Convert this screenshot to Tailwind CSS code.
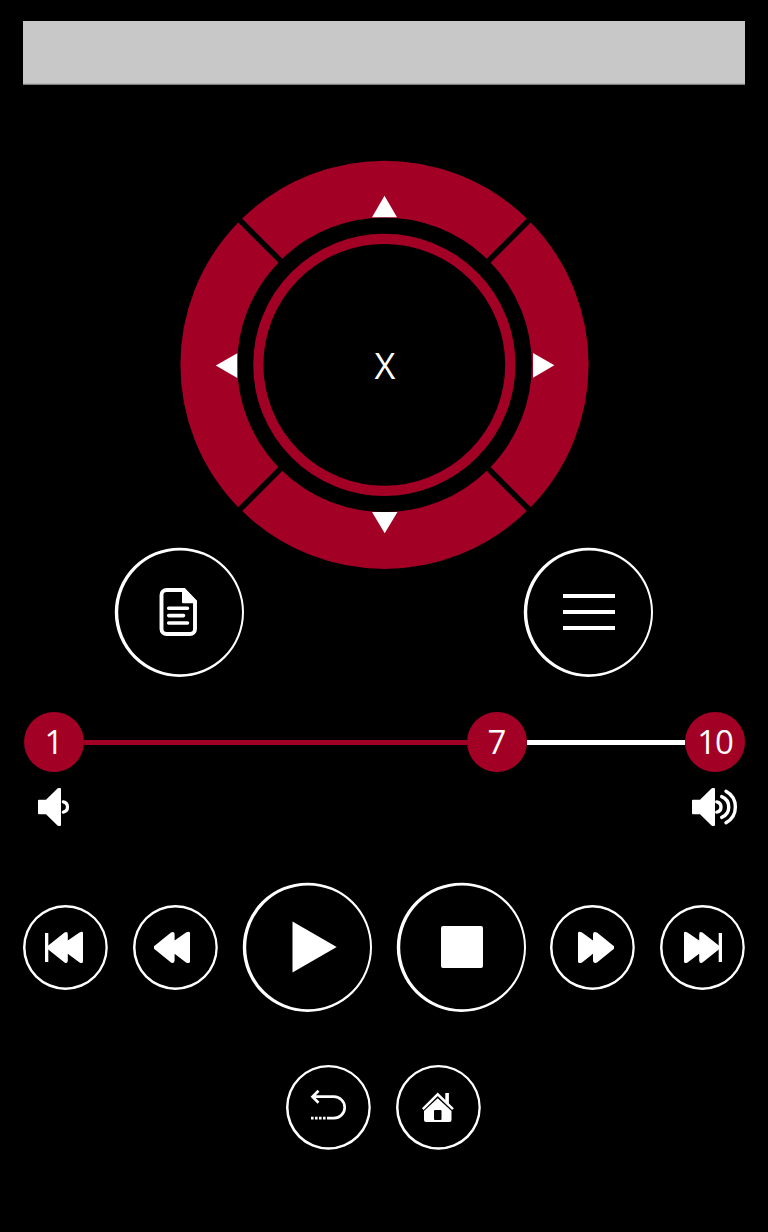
<!DOCTYPE html>
<html lang="en">
<head>
<meta charset="utf-8">
<title>Remote control</title>
<script src="https://cdn.jsdelivr.net/npm/@tailwindcss/browser@4"></script>
</head>
<body class="bg-black">
<svg class="hidden">
  <defs>
    <path id="ring-lg" fill-rule="evenodd" d="M0.4 65.3a64.6 64.6 0 1 0 129.2 0a64.6 64.6 0 1 0 -129.2 0zM3.8 65.3a61.9 61.9 0 1 0 123.8 0a61.9 61.9 0 1 0 -123.8 0z"/>
    <path id="ring-sm" fill-rule="evenodd" d="M0 42.4a42.4 42.4 0 1 0 84.8 0a42.4 42.4 0 1 0 -84.8 0zM2.5 42.3a40 40 0 1 0 80 0a40 40 0 1 0 -80 0z"/>
  </defs>
</svg>
<main class="flex h-[1232px] w-[768px] flex-col overflow-hidden bg-black px-[23px] pt-[21px] font-['Open_Sans',sans-serif] text-white">
  <div class="h-16 shrink-0 border-b border-[#808080] bg-[#c8c8c8] shadow-[inset_0_-1px_0_#b4b4b4]"></div>

  <!-- Direction wheel -->
  <div class="mt-[75px] grid h-[410px] shrink-0 place-items-center">
    <svg class="col-start-1 row-start-1 h-[410px] w-[410px]" viewBox="179 160 410 410">
      <circle cx="384.5" cy="364.8" r="175.700" fill="none" stroke="#a20025" stroke-width="56.8"/>
      <path d="M234 214.3L290 270.3M535 214.3L479 270.3M234 515.3L290 459.3M535 515.3L479 459.3" stroke="#000" stroke-width="5.500"/>
      <circle cx="384.3" cy="364.8" r="126" fill="none" stroke="#a20025" stroke-width="10.2"/>
      <path fill="#fff" d="M384.5 195.8L397 217.3H372zM384.7 533.2L397.5 512H372zM215.8 365.6L237.3 353.2V378zM554.4 365.3L533 353V377.7z"/>
    </svg>
    <span class="col-start-1 row-start-1 pt-[2px] pl-[2px] text-[36px] leading-none font-medium">X</span>
  </div>

  <div class="-mt-[23px] flex shrink-0 justify-between pr-[92px] pl-[91px]">
    <svg class="size-[130px]" viewBox="114 547 130 130" fill="#fff">
      <use href="#ring-lg" x="114.4" y="547"/>
      <path d="M184 590H166.500a5 5 0 0 0-5 5V629a5 5 0 0 0 5 5H190a5 5 0 0 0 5-5V601.500Z" fill="none" stroke="#fff" stroke-width="3.900"/>
      <path d="M182 589h3l11.500 11.500v2.800H183a1 1 0 0 1-1-1z"/>
      <path d="M168.700 608.200H187.500M168.700 615.600H183.500M168.700 623H187.500" stroke="#fff" stroke-width="3.600" stroke-linecap="round"/>
    </svg>
    <svg class="size-[130px]" viewBox="523 547 130 130" fill="#fff">
      <use href="#ring-lg" x="523.4" y="547"/>
      <path d="M563 594h52v4h-52zM563 610h52v4h-52zM563 626h52v4h-52z"/>
    </svg>
  </div>

  <!-- Volume -->
  <div class="mt-[35px] flex h-[60px] shrink-0 items-center pl-px text-[33px] leading-none font-normal">
    <div class="flex size-[60px] items-center justify-center rounded-full bg-[#a20025] pb-[2px]">1</div>
    <div class="mt-px h-[4.500px] w-[383px] bg-[#a20025]"></div>
    <div class="flex size-[60px] items-center justify-center rounded-full bg-[#a20025] pb-[2px]">7</div>
    <div class="mt-px h-[4.500px] w-[158px] bg-white"></div>
    <div class="flex size-[60px] items-center justify-center rounded-full bg-[#a20025] pb-[2px] tracking-[-1px]">10</div>
  </div>
  <div class="mt-[14px] flex h-[42px] shrink-0 justify-between px-[7px]">
    <svg class="h-[42px] w-[48px]" viewBox="30 786 48 42" fill="#fff">
      <path d="M39 799.700H46L57.500 788.400Q58 788 58.500 788H60Q61 788 61 789V825Q61 826 60 826H58.500Q58 826 57.500 825.600L46 814.300H39Q38 814.300 38 813.300V800.700Q38 799.700 39 799.700z"/>
      <path d="M63.300 801.900A5.200 5.200 0 0 1 63.300 812.100" fill="none" stroke="#fff" stroke-width="3.200" stroke-linecap="round"/>
    </svg>
    <svg class="h-[42px] w-[48px]" viewBox="690 786 48 42" fill="#fff">
      <path d="M693 799.700H700L711.500 788.400Q712 788 712.500 788H714Q715 788 715 789V825Q715 826 714 826H712.500Q712 826 711.500 825.600L700 814.300H693Q692 814.300 692 813.300V800.700Q692 799.700 693 799.700z"/>
      <path d="M716.800 801.900A5.200 5.200 0 0 1 716.800 812.100M721.700 796.600A11.200 11.200 0 0 1 721.700 817.400M726 791.200A18 18 0 0 1 726 822.800" fill="none" stroke="#fff" stroke-width="3.400" stroke-linecap="round"/>
    </svg>
  </div>

  <!-- Transport -->
  <div class="mt-[54px] flex h-[130px] shrink-0 items-center">
    <svg class="h-[86px] w-[86px] shrink-0" viewBox="23 904 86 86" fill="#fff">
      <use href="#ring-sm" x="23" y="905.1"/>
      <path d="M45 933h3.300v29H45z"/>
      <path d="M47 946.500L64.500 932.600Q67.800 931 67.800 934.500V940.500L79.500 932.400Q83 931 83 933V961.500Q83 964 79.500 962.600L67.800 953.800V960.500Q67.800 964 64.500 962.400L47 948.500z"/>
    </svg>
    <svg class="ml-[24px] h-[86px] w-[86px] shrink-0" viewBox="133 904 86 86" fill="#fff">
      <use href="#ring-sm" x="133" y="905.1"/>
      <path d="M154 946.300L171 932.600Q174.600 931 174.600 934.500V940.500L186 932.400Q190 931 190 933V961.500Q190 964 186 962.600L174.600 953.800V960.500Q174.600 964 171 962.400L154 948.700z"/>
    </svg>
    <svg class="ml-[23px] size-[130px] shrink-0" viewBox="242 882 130 130" fill="#fff">
      <use href="#ring-lg" x="242.4" y="882"/>
      <path d="M292.500 921.500L336.700 947L292.500 972.500z"/>
    </svg>
    <svg class="ml-[24px] size-[130px] shrink-0" viewBox="396 882 130 130" fill="#fff">
      <use href="#ring-lg" x="396.4" y="882"/>
      <rect x="441" y="926" width="42" height="42" rx="2"/>
    </svg>
    <svg class="ml-[24px] h-[86px] w-[86px] shrink-0" viewBox="550 904 86 86" fill="#fff">
      <use href="#ring-sm" x="550" y="905.1"/>
      <path d="M614 946.300L597 932.600Q593 931 593 934.500V940.500L582 932.400Q578 931 578 933V961.500Q578 964 582 962.600L593 953.800V960.500Q593 964 597 962.400L614 948.700z"/>
    </svg>
    <svg class="ml-[24px] h-[86px] w-[86px] shrink-0" viewBox="660 904 86 86" fill="#fff">
      <use href="#ring-sm" x="660" y="905.1"/>
      <path d="M718.700 933h3.300v29h-3.300z"/>
      <path d="M720 946.500L702.500 932.600Q699.200 931 699.200 934.500V940.500L687.500 932.400Q684 931 684 933V961.500Q684 964 687.500 962.600L699.200 953.800V960.500Q699.200 964 702.500 962.400L720 948.500z"/>
    </svg>
  </div>

  <div class="mt-[52px] flex h-[86px] shrink-0 gap-[24px] pl-[263px]">
    <svg class="h-[86px] w-[86px]" viewBox="286 1064 86 86" fill="#fff">
      <use href="#ring-sm" x="286" y="1065"/>
      <path d="M318.500 1090.700L312.500 1096.700L318.500 1102.700M312.500 1096.700H334A10.700 10.700 0 0 1 334 1118.100H327M311 1118.100h2.600m1.400 0h2.600m1.400 0h2.600m1.400 0h2.600" fill="none" stroke="#fff" stroke-width="2.700"/>
    </svg>
    <svg class="h-[86px] w-[86px]" viewBox="396 1064 86 86" fill="#fff">
      <use href="#ring-sm" x="396" y="1065"/>
      <path d="M445.300 1093h3.600v12l-3.600-3.500z"/>
      <path d="M422.800 1109.200L437.700 1094.300L453 1109.200" fill="none" stroke="#fff" stroke-width="2.500"/>
      <path fill-rule="evenodd" d="M437.700 1098.300L451.500 1111V1120Q451.500 1122 449.500 1122H426Q424 1122 424 1120V1111zM435 1110Q434 1110 434 1111V1119Q434 1120 435 1120H440.500Q441.500 1120 441.500 1119V1111Q441.500 1110 440.500 1110z"/>
    </svg>
  </div>
</main>
</body>
</html>
